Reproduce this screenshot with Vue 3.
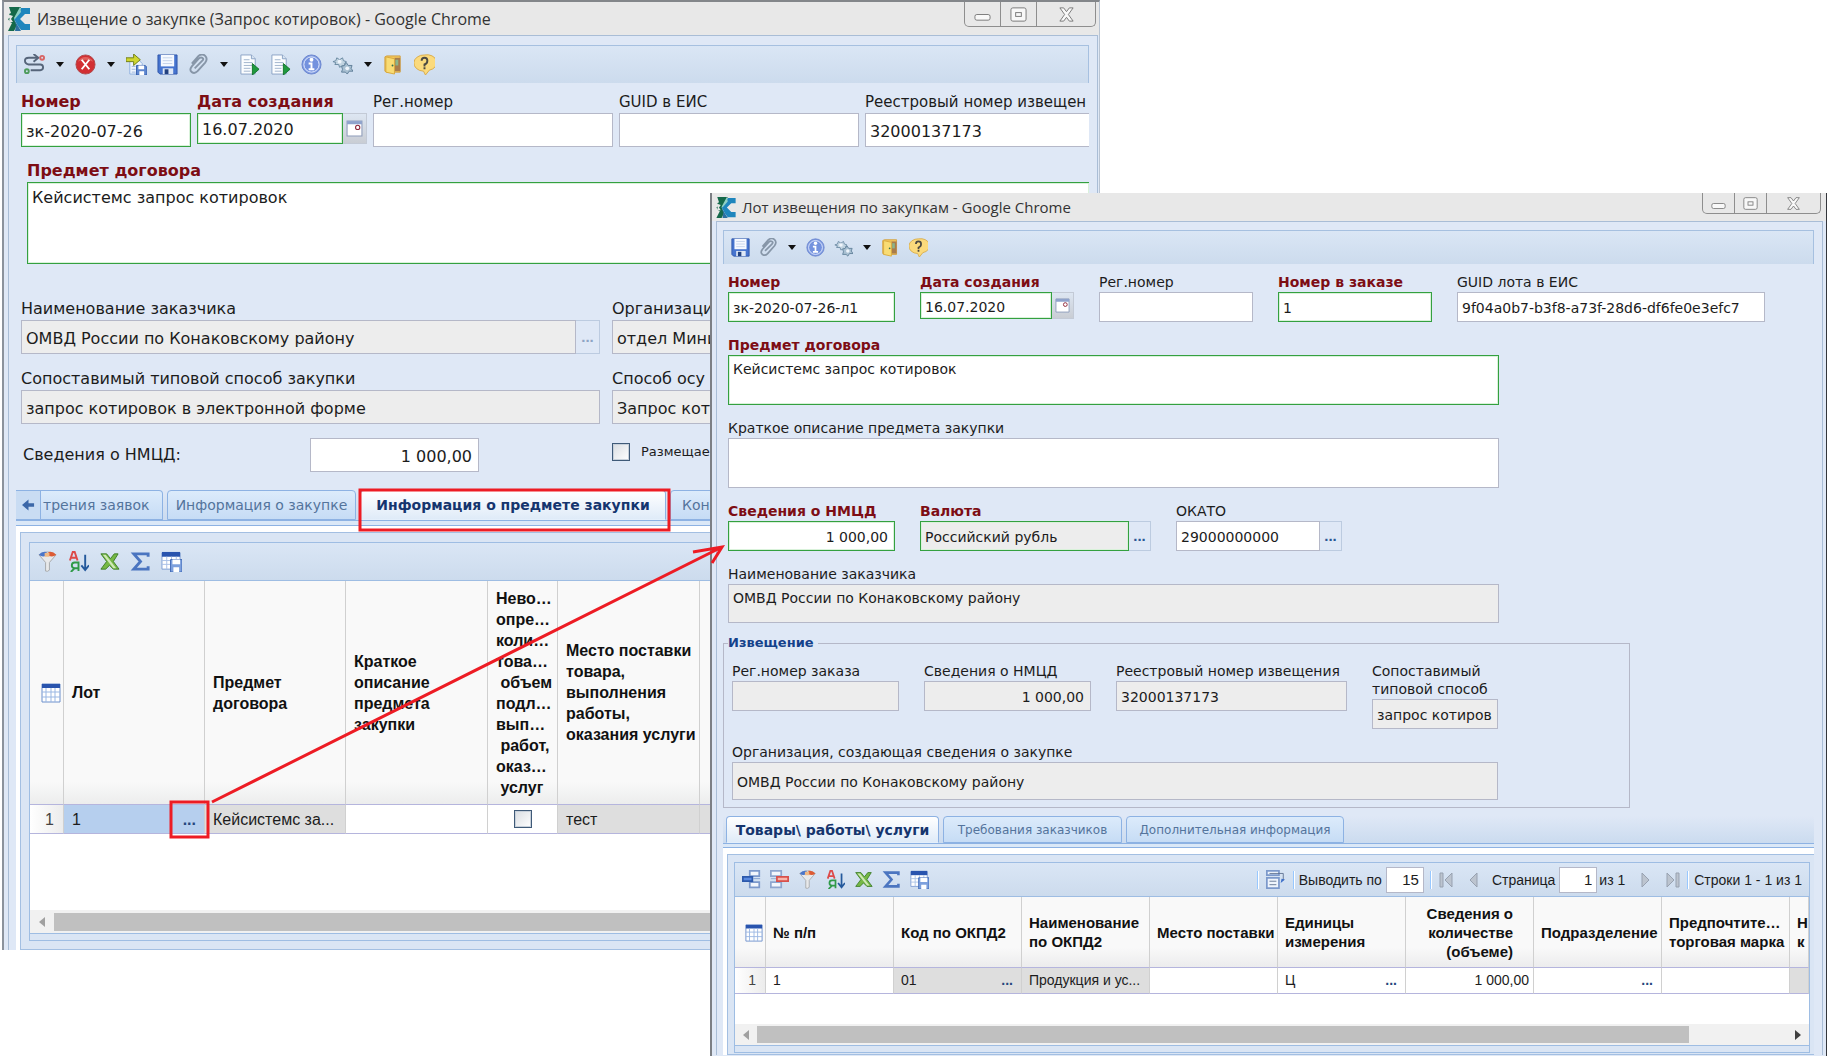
<script setup>
const noticeTools = [
  { icon: 'route', label: 'Маршрут', menu: true },
  { icon: 'cancel', label: 'Отмена', menu: true },
  { icon: 'saveas', label: 'Сохранить и закрыть' },
  { icon: 'save', label: 'Сохранить' },
  { icon: 'clip', label: 'Вложения', menu: true },
  { icon: 'doc', label: 'Отчёт' },
  { icon: 'doc', label: 'Печать' },
  { icon: 'info', label: 'Сведения' },
  { icon: 'gear', label: 'Настройки', menu: true },
  { icon: 'door', label: 'Выход' },
  { icon: 'help', label: 'Справка' },
]
const lotTools = [
  { icon: 'save', label: 'Сохранить' },
  { icon: 'clip', label: 'Вложения', menu: true },
  { icon: 'info', label: 'Сведения' },
  { icon: 'gear', label: 'Настройки', menu: true },
  { icon: 'door', label: 'Выход' },
  { icon: 'help', label: 'Справка' },
]
const gridTools = [
  { icon: 'filter', label: 'Фильтр' },
  { icon: 'sort', label: 'Сортировка' },
  { icon: 'excel', label: 'Экспорт в Excel' },
  { icon: 'sum', label: 'Итоги' },
  { icon: 'gridsave', label: 'Сохранить вид' },
]
const goodsTools = [
  { icon: 'rowadd', label: 'Добавить строку' },
  { icon: 'rowdel', label: 'Удалить строку' },
  ...gridTools,
]
// The last column of each table has no width and takes what is left.
const lotColumns = [
  { w: 141, lines: ['Лот'] },
  { w: 141, lines: ['Предмет', 'договора'] },
  { w: 142, lines: ['Краткое', 'описание', 'предмета', 'закупки'] },
  { w: 70, lines: ['Нево…', 'опре…', 'коли…', 'това…', '\u00a0объем', 'подл…', 'вып…', '\u00a0работ,', 'оказ…', '\u00a0услуг'] },
  { w: 142, lines: ['Место поставки', 'товара,', 'выполнения', 'работы,', 'оказания услуги'] },
  { lines: [] },
]
const goodsColumns = [
  { w: 128, lines: ['№ п/п'] },
  { w: 128, lines: ['Код по ОКПД2'] },
  { w: 128, lines: ['Наименование', 'по ОКПД2'] },
  { w: 128, lines: ['Место поставки'] },
  { w: 128, lines: ['Единицы', 'измерения'] },
  { w: 128, lines: ['Сведения о', 'количестве', '(объеме)'], num: true },
  { w: 128, lines: ['Подразделение'] },
  { w: 128, lines: ['Предпочтите…', 'торговая марка'] },
  { lines: ['Н', 'к'] },
]
const colStyle = (c) => (c.w ? { width: c.w + 'px' } : null)
</script>

<template>
  <svg class="sprite" aria-hidden="true">
    <symbol id="logo" viewBox="0 0 22 24">
      <path d="M1 0h12L9 7l-3 5 3 6-3 6H0l4-8-2-1-2-3 3-2-2-3 2-1z" fill="#15694a" />
      <path d="M2 8l3 1-2 3 2 3-4 0z" fill="#e8e8e8" />
      <path d="M13 1h9v6h-5l-5 5 5 5h5v6h-9l-3-4-4-7 4-5z" fill="#1f86bd" />
      <path d="M12 0L6 11l1 1 6-7z" fill="#8fd0c4" />
      <path d="M6 13l4 6 3 5H7l1-6z" fill="#2b6fa0" />
    </symbol>
    <symbol id="route" viewBox="0 0 22 22">
      <path d="M14 4H5q-4 0-4 3t4 4h12q3 0 3 3t-3 3H7" fill="none" stroke="#56657a" stroke-width="2" />
      <path d="M10 0l5 4-5 4" fill="none" stroke="#56657a" stroke-width="2" />
      <circle cx="19" cy="4" r="2" fill="none" stroke="#d86464" stroke-width="2" />
      <circle cx="3" cy="18" r="2" fill="none" stroke="#4e9c5c" stroke-width="2" />
    </symbol>
    <symbol id="cancel" viewBox="0 0 22 22">
      <circle cx="11" cy="11" r="10" fill="#d22f33" stroke="#b04a4c" />
      <path d="M3 8a9 9 0 0 1 16 0q-8-4-16 0z" fill="#e0605c" />
      <path d="M7 6l8 10M15 6L7 16" stroke="#fff" stroke-width="2" />
    </symbol>
    <symbol id="saveas" viewBox="0 0 22 22">
      <path d="M4 6h9l4 4v11H4z" fill="#eef4fc" stroke="#8fb0e0" />
      <path d="M11 12h9l2 2v8H11z" fill="#5d86cf" stroke="#3560ad" />
      <path d="M13 12h6v4h-6zM14 18h5v4h-5z" fill="#fff" />
      <path d="M6 13h4M6 16h4M6 19h4" stroke="#9db6dc" />
      <path d="M0 4h8V0l7 6-7 6V8H0z" fill="#cfd62f" stroke="#6f7d1a" />
    </symbol>
    <symbol id="save" viewBox="0 0 22 22">
      <path d="M1 1h20v20H3l-2-2z" fill="#4674cf" stroke="#2f56a8" />
      <path d="M4 1h14v12H4z" fill="#f6f9ff" />
      <path d="M6 4h10M6 7h10M6 10h10" stroke="#c3d2ea" />
      <path d="M6 15h11v6H6z" fill="#dfe8f6" />
      <path d="M8 16h4v5H8z" fill="#23417f" />
    </symbol>
    <symbol id="clip" viewBox="0 0 22 22">
      <path d="M7 15l8-8q2-2 0-3t-4 1l-7 8q-3 4 0 6t6-1l8-9q3-4 0-7t-7 0l-7 8" fill="none" stroke="#8796a8" stroke-width="2" />
    </symbol>
    <symbol id="doc" viewBox="0 0 22 22">
      <path d="M2 1h11l4 4v16H2z" fill="#fbfdff" stroke="#8aa3c4" />
      <path d="M13 1v4h4" fill="#d9e5f3" stroke="#8aa3c4" />
      <path d="M5 6h6M5 9h9M5 12h9M5 15h7M5 18h7" stroke="#9fb3cd" />
      <path d="M14 10l7 6-7 6z" fill="#1f9a3e" stroke="#14742b" />
    </symbol>
    <symbol id="info" viewBox="0 0 22 22">
      <circle cx="11" cy="11" r="10" fill="#7f9bdf" stroke="#6a84cf" />
      <circle cx="11" cy="11" r="8" fill="#7492de" stroke="#e6edff" />
      <circle cx="11" cy="6" r="2" fill="#fff" />
      <path d="M8 10h4M11 9v7M8 16h6" fill="none" stroke="#fff" stroke-width="2" />
    </symbol>
    <symbol id="gear" viewBox="0 0 22 22">
      <path d="M1 8l3-1 1-3 3 2 3-2 1 3 3 1-2 2 1 3-3-1-3 2-1-3H3l1-2z" fill="#c3d5e2" stroke="#6b8aa3" />
      <path d="M10 13l3-1 2-3 2 3h4l-1 3 2 3-4 0-2 3-2-2-4 0 1-3z" fill="#a9c0d2" stroke="#5f7f99" />
      <circle cx="8" cy="8" r="2" fill="#eef4fb" />
      <circle cx="16" cy="15" r="2" fill="#eef4fb" />
    </symbol>
    <symbol id="door" viewBox="0 0 22 22">
      <path d="M2 3l2-1h14v17H4l-2-1z" fill="#f2c65a" stroke="#d2a040" />
      <path d="M12 4h6v14h-6z" fill="#a97c4b" />
      <path d="M13 6h3v6h-3z" fill="#8bb58a" />
      <path d="M3 3l9 2v16l-9-2z" fill="#f9dc74" stroke="#d8a93c" />
      <circle cx="10" cy="12" r="1" fill="#356f4c" />
    </symbol>
    <symbol id="help" viewBox="0 0 22 22">
      <path d="M11 1a10 8 0 0 1 5 16l-4 5-2-4A10 8 0 0 1 11 1z" fill="#fbda7c" stroke="#d9ab48" />
      <path d="M8 7q0-3 3-3t3 3-3 4v2M11 14v2" fill="none" stroke="#4d4a42" stroke-width="2" />
    </symbol>
    <symbol id="filter" viewBox="0 0 22 22">
      <path d="M2 4q9-6 18 0l-7 8v8q-2 2-4 1v-9z" fill="#e8e9ea" stroke="#a6a8aa" />
      <path d="M2 4q3-4 8-3v4q-5 2-8-1z" fill="#4b76c9" />
      <path d="M12 1q5-1 8 3-3 3-8 1z" fill="#dd5b34" />
      <path d="M8 2h5v4H8z" fill="#f0b985" />
    </symbol>
    <symbol id="sort" viewBox="0 0 22 22">
      <path d="M2 10l3-9h2l3 9M3 7h6" fill="none" stroke="#dd4a48" stroke-width="2" />
      <path d="M11 21v-9H7q-3 0-3 3t3 3h4M7 18l-4 4" fill="none" stroke="#2f9a48" stroke-width="2" />
      <path d="M18 4v15M14 15l4 5 4-5" fill="none" stroke="#24599c" stroke-width="2" />
    </symbol>
    <symbol id="excel" viewBox="0 0 22 22">
      <path d="M2 3h6l4 5 4-5h4l-5 8 6 8h-6l-4-4-4 4H2l6-8z" fill="#76b845" stroke="#3c7d28" />
      <path d="M4 4h3l11 14h-3z" fill="#cfe8b6" />
    </symbol>
    <symbol id="sum" viewBox="0 0 22 22">
      <path d="M19 6V3H4l7 8-7 8h15v-3" fill="none" stroke="#4b75c0" stroke-width="3" />
    </symbol>
    <symbol id="gridsave" viewBox="0 0 22 22">
      <path d="M1 2h19v17H1z" fill="#fff" stroke="#7d9dd3" />
      <path d="M1 1h19v5H1z" fill="#2954ae" />
      <path d="M1 10h19M1 14h19M6 6v13M11 6v13M16 6v13" stroke="#a8c0e6" />
      <path d="M10 9h12v13H10z" fill="#7da0dd" stroke="#3f69b7" />
      <path d="M12 9h8v5h-8zM13 17h6v5h-6z" fill="#fff" />
    </symbol>
    <symbol id="gridicon" viewBox="0 0 20 20">
      <path d="M1 1h18v18H1z" fill="#fff" stroke="#6d90cc" />
      <path d="M1 1h18v4H1z" fill="#2954ae" />
      <path d="M1 9h18M1 14h18M5 5v14M10 5v14M14 5v14" stroke="#9ab7e3" />
    </symbol>
    <symbol id="rowadd" viewBox="0 0 22 22">
      <path d="M9 1h11v6H9zM9 14h11v6H9z" fill="#f2f6fc" stroke="#7c99cb" stroke-width="2" />
      <path d="M1 8h11v5H1z" fill="#5b8ae0" stroke="#2c59ac" stroke-width="2" />
      <path d="M13 10h8" stroke="#7c99cb" />
    </symbol>
    <symbol id="rowdel" viewBox="0 0 22 22">
      <path d="M1 1h12v6H1zM1 14h12v6H1z" fill="#f2f6fc" stroke="#8ea6cf" stroke-width="2" />
      <path d="M8 8h13v5H8z" fill="#f9b4aa" stroke="#d8504b" stroke-width="2" />
      <path d="M1 10h6" stroke="#8ea6cf" />
    </symbol>
    <symbol id="pagesize" viewBox="0 0 22 22">
      <path d="M1 1h14v5H1zM1 9h14v12H1z" fill="#eef4fc" stroke="#7c99cb" stroke-width="2" />
      <path d="M4 4h16v8M4 13h8M4 17h8" fill="none" stroke="#5b6f8e" />
      <path d="M17 15l1-5 4 1z" fill="#3d6fc9" />
    </symbol>
  </svg>

  <main class="desktop">
    <section class="win notice" aria-label="Извещение о закупке">
      <header class="titlebar">
        <svg class="logo"><use href="#logo" /></svg>
        <h1>Извещение о закупке (Запрос котировок) - Google Chrome</h1>
        <div class="winbtns">
          <button aria-label="Свернуть"><svg viewBox="0 0 18 18"><rect x="1" y="9" width="16" height="6" rx="2" /></svg></button>
          <button aria-label="Развернуть"><svg viewBox="0 0 18 18"><rect x="1" y="2" width="16" height="14" rx="2" /><rect x="6" y="7" width="6" height="4" /></svg></button>
          <button class="close" aria-label="Закрыть"><svg viewBox="0 0 18 18"><path d="M2 2h4l3 4 3-4h4l-5 7 5 7h-4l-3-4-3 4H2l5-7z" /></svg></button>
        </div>
      </header>
      <div class="body">
        <div class="toolbar" role="toolbar">
          <template v-for="t in noticeTools" :key="t.label">
            <button class="tool" :aria-label="t.label"><svg><use :href="'#' + t.icon" /></svg></button>
            <button v-if="t.menu" class="caret" :aria-label="t.label + ': меню'"></button>
          </template>
        </div>

        <div class="row top">
          <div class="field w170">
            <label class="req" for="n-num">Номер</label>
            <input id="n-num" class="must" value="зк-2020-07-26" />
          </div>
          <div class="field w170">
            <label class="req" for="n-date">Дата создания</label>
            <div class="combo date">
              <input id="n-date" class="must" value="16.07.2020" />
              <button class="cal" aria-label="Календарь"><svg viewBox="0 0 16 16"><path d="M1 1h14v14H1z" fill="#fff" stroke="#8f9dbb" /><path d="M1 1h14v3H1z" fill="#8fa3cc" /><circle cx="11" cy="7" r="2" fill="#fff" stroke="#8d2438" /></svg></button>
            </div>
          </div>
          <div class="field w240">
            <label for="n-reg">Рег.номер</label>
            <input id="n-reg" value="" />
          </div>
          <div class="field w240">
            <label for="n-guid">GUID в ЕИС</label>
            <input id="n-guid" value="" />
          </div>
          <div class="field w240">
            <label for="n-reestr">Реестровый номер извещен</label>
            <input id="n-reestr" value="32000137173" />
          </div>
        </div>

        <div class="field subject">
          <label class="req" for="n-subj">Предмет договора</label>
          <textarea id="n-subj" class="must">Кейсистемс запрос котировок</textarea>
        </div>

        <div class="pair first">
          <div class="field">
            <label for="n-cust">Наименование заказчика</label>
            <div class="combo">
              <input id="n-cust" class="ro" readonly value="ОМВД России по Конаковскому району" />
              <button class="dots dim" aria-label="Выбрать">...</button>
            </div>
          </div>
          <div class="field">
            <label for="n-org">Организаци</label>
            <input id="n-org" class="ro" readonly value="отдел Мини" />
          </div>
        </div>
        <div class="pair">
          <div class="field">
            <label for="n-type">Сопоставимый типовой способ закупки</label>
            <input id="n-type" class="ro" readonly value="запрос котировок в электронной форме" />
          </div>
          <div class="field">
            <label for="n-way">Способ осу</label>
            <input id="n-way" class="ro" readonly value="Запрос кот" />
          </div>
        </div>
        <div class="pair money">
          <div class="inline">
            <label for="n-sum">Сведения о НМЦД:</label>
            <input id="n-sum" class="num" value="1 000,00" />
          </div>
          <div class="inline check">
            <input id="n-place" type="checkbox" />
            <label for="n-place">Размещае</label>
          </div>
        </div>

        <nav class="tabs">
          <button class="scroller" aria-label="Назад"><svg viewBox="0 0 14 12"><path d="M7 0v4h6v4H7v4L0 6z" fill="#3c67a8" /></svg></button>
          <button class="tab cut">трения заявок</button>
          <button class="tab t2">Информация о закупке</button>
          <button class="tab active t3">Информация о предмете закупки</button>
          <button class="tab t4">Кон</button>
        </nav>

        <div class="sheet">
          <div class="grid">
            <div class="toolbar flat" role="toolbar">
              <button v-for="t in gridTools" :key="t.label" class="tool" :aria-label="t.label"><svg><use :href="'#' + t.icon" /></svg></button>
            </div>
            <table>
              <colgroup>
                <col class="c-idx" />
                <col v-for="(c, i) in lotColumns" :key="i" :style="colStyle(c)" />
              </colgroup>
              <thead>
                <tr>
                  <th class="idx"><svg class="gi"><use href="#gridicon" /></svg></th>
                  <th v-for="(c, i) in lotColumns" :key="i"><div v-for="l in c.lines" :key="l">{{ l }}</div></th>
                </tr>
              </thead>
              <tbody>
                <tr>
                  <td class="idx">1</td>
                  <td class="sel"><div class="pick"><span>1</span><button aria-label="Открыть лот">...</button></div></td>
                  <td class="gray">Кейсистемс за...</td>
                  <td></td>
                  <td class="mid"><input type="checkbox" aria-label="Невозможно определить количество" /></td>
                  <td class="gray">тест</td>
                  <td class="gray"></td>
                </tr>
              </tbody>
            </table>
            <div class="blank"></div>
            <div class="hscroll"><span class="arr left"></span><span class="thumb"></span></div>
            <div class="foot"></div>
          </div>
        </div>
      </div>
    </section>

    <section class="win lot" aria-label="Лот извещения по закупкам">
      <header class="titlebar">
        <svg class="logo"><use href="#logo" /></svg>
        <h1>Лот извещения по закупкам - Google Chrome</h1>
        <div class="winbtns">
          <button aria-label="Свернуть"><svg viewBox="0 0 18 18"><rect x="1" y="9" width="16" height="6" rx="2" /></svg></button>
          <button aria-label="Развернуть"><svg viewBox="0 0 18 18"><rect x="1" y="2" width="16" height="14" rx="2" /><rect x="6" y="7" width="6" height="4" /></svg></button>
          <button class="close" aria-label="Закрыть"><svg viewBox="0 0 18 18"><path d="M2 2h4l3 4 3-4h4l-5 7 5 7h-4l-3-4-3 4H2l5-7z" /></svg></button>
        </div>
      </header>
      <div class="body">
        <div class="toolbar" role="toolbar">
          <template v-for="t in lotTools" :key="t.label">
            <button class="tool" :aria-label="t.label"><svg><use :href="'#' + t.icon" /></svg></button>
            <button v-if="t.menu" class="caret" :aria-label="t.label + ': меню'"></button>
          </template>
        </div>

        <div class="form">
          <div class="row">
            <div class="field w167">
              <label class="req" for="l-num">Номер</label>
              <input id="l-num" class="must" value="зк-2020-07-26-л1" />
            </div>
            <div class="field w154">
              <label class="req" for="l-date">Дата создания</label>
              <div class="combo date">
                <input id="l-date" class="must" value="16.07.2020" />
                <button class="cal" aria-label="Календарь"><svg viewBox="0 0 16 16"><path d="M1 1h14v14H1z" fill="#fff" stroke="#8f9dbb" /><path d="M1 1h14v3H1z" fill="#8fa3cc" /><circle cx="11" cy="7" r="2" fill="#fff" stroke="#8d2438" /></svg></button>
              </div>
            </div>
            <div class="field w154">
              <label for="l-reg">Рег.номер</label>
              <input id="l-reg" value="" />
            </div>
            <div class="field w154">
              <label class="req" for="l-ord">Номер в заказе</label>
              <input id="l-ord" class="must" value="1" />
            </div>
            <div class="field w308">
              <label for="l-guid">GUID лота в ЕИС</label>
              <input id="l-guid" value="9f04a0b7-b3f8-a73f-28d6-df6fe0e3efc7" />
            </div>
          </div>
          <div class="field wide">
            <label class="req" for="l-subj">Предмет договора</label>
            <textarea id="l-subj" class="must tall">Кейсистемс запрос котировок</textarea>
          </div>
          <div class="field wide">
            <label for="l-short">Краткое описание предмета закупки</label>
            <textarea id="l-short" class="tall"></textarea>
          </div>
          <div class="row">
            <div class="field w167">
              <label class="req" for="l-sum">Сведения о НМЦД</label>
              <input id="l-sum" class="must num" value="1 000,00" />
            </div>
            <div class="field w231">
              <label class="req" for="l-cur">Валюта</label>
              <div class="combo">
                <input id="l-cur" class="must ro" readonly value="Российский рубль" />
                <button class="dots" aria-label="Выбрать валюту">...</button>
              </div>
            </div>
            <div class="field w166">
              <label for="l-okato">ОКАТО</label>
              <div class="combo">
                <input id="l-okato" value="29000000000" />
                <button class="dots" aria-label="Выбрать ОКАТО">...</button>
              </div>
            </div>
          </div>
          <div class="field wide">
            <label for="l-cust">Наименование заказчика</label>
            <textarea id="l-cust" class="ro" readonly>ОМВД России по Конаковскому району</textarea>
          </div>
        </div>

        <fieldset>
          <legend>Извещение</legend>
          <div class="row">
            <div class="field w167">
              <label for="f-reg">Рег.номер заказа</label>
              <input id="f-reg" class="ro" readonly value="" />
            </div>
            <div class="field w167">
              <label for="f-sum">Сведения о НМЦД</label>
              <input id="f-sum" class="ro num" readonly value="1 000,00" />
            </div>
            <div class="field w231">
              <label for="f-reestr">Реестровый номер извещения</label>
              <input id="f-reestr" class="ro" readonly value="32000137173" />
            </div>
            <div class="field w126">
              <label for="f-type">Сопоставимый<br />типовой способ</label>
              <input id="f-type" class="ro" readonly value="запрос котиров" />
            </div>
          </div>
          <div class="field org">
            <label for="f-org">Организация, создающая сведения о закупке</label>
            <input id="f-org" class="ro" readonly value="ОМВД России по Конаковскому району" />
          </div>
        </fieldset>

        <nav class="tabs">
          <button class="tab active g1">Товары\ работы\ услуги</button>
          <button class="tab g2">Требования заказчиков</button>
          <button class="tab g3">Дополнительная информация</button>
        </nav>

        <div class="sheet">
          <div class="grid">
            <div class="toolbar flat" role="toolbar">
              <button v-for="t in goodsTools" :key="t.label" class="tool" :aria-label="t.label"><svg><use :href="'#' + t.icon" /></svg></button>
              <div class="pager">
                <i class="sep"></i>
                <button class="tool" aria-label="Размер страницы"><svg><use href="#pagesize" /></svg></button>
                <i class="sep"></i>
                <label for="p-size">Выводить по</label>
                <input id="p-size" class="num" value="15" />
                <i class="sep"></i>
                <button class="nav" aria-label="Первая"><svg viewBox="0 0 14 16"><path d="M1 1h3v14H1zM13 1v14L6 8z" /></svg></button>
                <button class="nav" aria-label="Предыдущая"><svg viewBox="0 0 14 16"><path d="M10 1v14L3 8z" /></svg></button>
                <label for="p-page">Страница</label>
                <input id="p-page" class="num" value="1" />
                <span class="of">из 1</span>
                <button class="nav" aria-label="Следующая"><svg viewBox="0 0 14 16"><path d="M4 1v14l7-7z" /></svg></button>
                <button class="nav" aria-label="Последняя"><svg viewBox="0 0 14 16"><path d="M1 1v14l7-7zM10 1h3v14h-3z" /></svg></button>
                <i class="sep"></i>
                <span class="total">Строки 1 - 1 из 1</span>
              </div>
            </div>
            <table>
              <colgroup>
                <col class="c-idx" />
                <col v-for="(c, i) in goodsColumns" :key="i" :style="colStyle(c)" />
              </colgroup>
              <thead>
                <tr>
                  <th class="idx"><svg class="gi"><use href="#gridicon" /></svg></th>
                  <th v-for="(c, i) in goodsColumns" :key="i" :class="{ rt: c.num }"><div v-for="l in c.lines" :key="l">{{ l }}</div></th>
                </tr>
              </thead>
              <tbody>
                <tr>
                  <td class="idx">1</td>
                  <td>1</td>
                  <td class="gray"><div class="pick"><span>01</span><button aria-label="Выбрать код">...</button></div></td>
                  <td class="gray">Продукция и ус...</td>
                  <td></td>
                  <td><div class="pick"><span>Ц</span><button aria-label="Выбрать единицу">...</button></div></td>
                  <td class="right">1 000,00</td>
                  <td><div class="pick"><span></span><button aria-label="Выбрать подразделение">...</button></div></td>
                  <td></td>
                  <td class="gray"></td>
                </tr>
              </tbody>
            </table>
            <div class="blank"></div>
            <div class="hscroll"><span class="arr left"></span><span class="thumb"></span><span class="arr right"></span></div>
            <div class="foot"></div>
          </div>
        </div>
      </div>
    </section>

    <svg class="marks" aria-hidden="true">
      <rect x="360" y="490" width="309" height="40" />
      <rect x="171" y="802" width="37" height="35" />
      <path d="M212 802L722 547M693 552l29-5-10 16" />
    </svg>
  </main>
</template>

<style>
body {
  margin: 0;
  background: #fff;
}
</style>

<style scoped>
* {
  box-sizing: border-box;
}
.sprite {
  position: absolute;
  width: 0;
  height: 0;
}
.desktop {
  position: relative;
  display: grid;
  min-height: 100vh;
  overflow: hidden;
  font-family: 'DejaVu Sans', Verdana, sans-serif;
  color: #1c1c1c;
}
.win {
  grid-area: 1 / 1;
  display: flex;
  flex-direction: column;
  background: #dfe8f6;
  min-width: 0;
}
.notice {
  --fs: 16px;
  --grid-fs: 16px;
  --lh: 20px;
  --in: 34px;
  --icon: 21px;
  --tool: 24px;
  --gap: 7px;
  align-self: start;
  margin-left: 2px;
  width: 60.1%;
  padding: 0 1px 0 4px;
  border-left: 2px solid #8b929c;
  border-top: 2px solid #83868a;
  border-right: 1px solid #b9c4d2;
}
.lot {
  --fs: 14px;
  --grid-fs: 14px;
  --lh: 18px;
  --in: 30px;
  --icon: 19px;
  --tool: 22px;
  --gap: 6px;
  margin: 193px 0 0 710px;
  padding: 0 3px 0 4px;
  border-left: 2px solid #7c7f84;
  border-right: 1px solid #33363b;
  z-index: 1;
}
button {
  margin: 0;
  padding: 0;
  border: 0;
  background: none;
  font: inherit;
  color: inherit;
}
.titlebar {
  display: flex;
  align-items: center;
  margin: 0 -1px 0 -4px;
  padding: 0 3px 0 4px;
  height: 33px;
  background: #e8e8e8;
  gap: 7px;
}
.lot .titlebar {
  height: 28px;
  margin: 0 -3px 0 -4px;
  padding-right: 5px;
  gap: 6px;
}
.logo {
  width: 22px;
  height: 24px;
}
.lot .logo {
  width: 20px;
  height: 21px;
}
h1 {
  flex: 1;
  margin: 0;
  font: 400 16px/24px 'Open Sans', sans-serif;
  color: #333;
  white-space: nowrap;
}
.lot h1 {
  font-size: 15px;
}
.winbtns {
  display: flex;
  align-self: flex-start;
  border: 1px solid #8e8e8e;
  border-top: 0;
  border-radius: 0 0 5px 5px;
}
.winbtns button {
  display: grid;
  place-items: center;
  width: 36px;
  height: 24px;
  border-right: 1px solid #8e8e8e;
}
.winbtns .close {
  width: 58px;
  border-right: 0;
}
.winbtns svg {
  width: 17px;
  height: 17px;
  fill: #f8f8f8;
  stroke: #777;
  stroke-width: 1;
}
.lot .winbtns button {
  width: 32px;
  height: 20px;
}
.lot .winbtns .close {
  width: 53px;
}
.lot .winbtns svg {
  width: 15px;
  height: 15px;
}
.body {
  border: 1px solid #a9bdd6;
  border-bottom: 0;
  padding: 9px 8px 0 7px;
  overflow: hidden;
}
.lot .body {
  padding: 8px 8px 0 6px;
}
.toolbar {
  display: flex;
  align-items: center;
  gap: var(--gap);
  height: 38px;
  padding-left: 5px;
  border: 1px solid #a6c0e0;
  border-bottom: 0;
  background: linear-gradient(#dae6f5, #ccdbed);
}
.lot .toolbar {
  height: 34px;
}
.tool {
  display: grid;
  place-items: center;
  width: var(--tool);
  height: var(--tool);
  flex: none;
}
.tool svg {
  width: var(--icon);
  height: var(--icon);
}
.caret {
  display: grid;
  place-items: center;
  width: 13px;
}
.caret::before {
  content: '';
  border: 4px solid transparent;
  border-top: 5px solid #111;
  border-bottom: 0;
}
.row {
  display: flex;
  align-items: flex-start;
}
.row.top {
  gap: 6px;
  margin: 9px 0 0 5px;
  overflow: hidden;
}
.field {
  flex: none;
  display: flex;
  flex-direction: column;
  gap: 1px;
}
label {
  font-size: var(--fs);
  line-height: var(--lh);
  white-space: nowrap;
}
.top label {
  font-size: 15px;
}
.field .req {
  font-size: var(--fs);
  font-weight: 700;
  color: #7d0d14;
}
input:not([type='checkbox']),
textarea {
  width: 100%;
  min-width: 0;
  height: var(--in);
  margin: 0;
  padding: 2px 4px 0;
  border: 1px solid #b5b8c8;
  border-radius: 0;
  background: #fff;
  color: #1c1c1c;
  font: 400 var(--fs) / 20px 'DejaVu Sans', Verdana, sans-serif;
  outline: 0;
}
textarea {
  display: block;
  resize: none;
  overflow: hidden;
}
.notice textarea {
  height: 82px;
  padding-top: 5px;
  border-right: 0 !important;
}
.lot textarea {
  height: 39px;
  padding-top: 3px;
}
.lot textarea.tall {
  height: 50px;
}
input.must:not([type='checkbox']),
textarea.must {
  border-color: #34a040;
  box-shadow: inset 0 0 0 1px #d9f2da;
}
input.ro:not([type='checkbox']),
textarea.ro {
  background: #ededed;
}
input.num:not([type='checkbox']) {
  text-align: right;
  padding-right: 6px;
}
.w126 { width: 126px; }
.w154 { width: 154px; }
.w166 { width: 166px; }
.w167 { width: 167px; }
.w170 { width: 170px; }
.w231 { width: 231px; }
.w240 { width: 240px; }
.w308 { width: 308px; }
.combo {
  display: flex;
}
.combo.date input {
  height: 31px;
}
.lot .combo.date input {
  height: 27px;
}
.cal {
  display: grid;
  place-items: center;
  flex: none;
  width: 24px;
  background: linear-gradient(#dde6f2, #c9cdd4);
  border: 1px solid #c3cad6;
  border-left: 0;
}
.lot .cal {
  width: 22px;
}
.cal svg {
  width: 17px;
  height: 17px;
}
.lot .cal svg {
  width: 15px;
  height: 15px;
}
.dots {
  flex: none;
  width: 24px;
  border: 1px solid #bccbe0;
  border-left: 0;
  color: #2c5794;
  font: 700 15px/20px 'Liberation Sans', Arial, sans-serif;
}
.lot .dots {
  width: 22px;
}
.dots.dim {
  color: #8ea4c4;
}
.subject {
  margin: 14px 0 0 11px;
}
.pair {
  display: grid;
  grid-template-columns: 579px minmax(0, 1fr);
  gap: 12px;
  margin: 15px 0 0 5px;
}
.pair.first {
  margin-top: 35px;
}
.pair.money {
  margin-top: 14px;
}
.inline {
  display: flex;
  align-items: center;
}
.inline label {
  padding-left: 2px;
  width: 289px;
}
.inline .num {
  flex: none;
  width: 169px !important;
}
.inline.check {
  padding-bottom: 6px;
}
.inline.check label {
  padding-left: 11px;
  width: auto;
  font-size: 13px;
}
input[type='checkbox'] {
  appearance: none;
  flex: none;
  width: 18px;
  height: 18px;
  margin: 0;
  border: 1px solid #3f5a78;
  box-shadow: inset 0 0 0 1px #c7d0da;
  background: linear-gradient(135deg, #d9dde2, #fff);
}
.tabs {
  display: flex;
  gap: 4px;
  margin-top: 18px;
  height: 36px;
  padding-bottom: 5px;
  border-bottom: 1px solid #8db2e3;
  background: linear-gradient(#dfe8f6 0, #cbdbef 30px, #8db2e3 30px, #8db2e3 31px, #dbe8f7 31px);
  overflow: hidden;
}
.lot .tabs {
  height: 32px;
  margin-top: 8px;
  padding: 0 0 4px 3px;
  background: linear-gradient(#dfe8f6 0, #cbdbef 27px, #8db2e3 27px, #8db2e3 28px, #dbe8f7 28px);
}
.tab {
  flex: none;
  border: 1px solid #8db2e3;
  border-radius: 4px 4px 0 0;
  background: linear-gradient(#dcebfb, #c6dcf5);
  color: #54749c;
  font: 400 14px/20px 'DejaVu Sans', Tahoma, sans-serif;
  white-space: nowrap;
}
.lot .tab {
  font-size: 12px;
}
.tab.active {
  border-bottom-color: #e4effb;
  background: linear-gradient(#fff, #dfebf8);
  color: #15356e;
  font-weight: 700;
}
.lot .tab.active {
  font-size: 14px;
}
.scroller {
  display: grid;
  place-items: center;
  flex: none;
  width: 25px;
  border: 1px solid #8db2e3;
  border-left: 0;
  background: #c9dcf3;
}
.scroller svg {
  width: 13px;
  height: 12px;
}
.tab.cut {
  width: 122px;
  margin-left: -4px;
  border-radius: 0 4px 0 0;
  border-left: 0;
  text-align: left;
  padding-left: 2px;
}
.t2 { width: 189px; }
.t3 { width: 306px; }
.t4 {
  width: 120px;
  text-align: left;
  padding-left: 11px;
}
.g1 { width: 213px; }
.g2 { width: 179px; }
.g3 { width: 218px; }
.sheet {
  background: #fff;
  padding: 6px 0 0 4px;
}
.grid {
  border: 1px solid #a3bfe2;
  border-right: 0;
  background: #dae5f4;
  padding: 9px 0 8px 8px;
}
.lot .grid {
  padding: 7px 4px 1px 6px;
}
.toolbar.flat {
  border: 1px solid #9ebde3;
  height: 39px;
}
.lot .toolbar.flat {
  height: 35px;
}
.pager {
  display: flex;
  align-items: center;
  margin-left: auto;
  padding-right: 7px;
}
.pager .tool {
  width: 34px;
}
.pager label,
.pager span {
  font: 400 14px/18px 'Liberation Sans', Arial, sans-serif;
  white-space: nowrap;
  padding: 0 4px;
}
.pager .of {
  padding: 0 6px 0 2px;
}
.pager .total {
  padding: 0 0 0 5px;
}
.pager input.num:not([type='checkbox']) {
  width: 38px;
  height: 26px;
  padding: 1px 4px;
  font: 400 15px/20px 'Liberation Sans', Arial, sans-serif;
}
.sep {
  width: 2px;
  height: 18px;
  border-left: 1px solid #98c8ff;
  border-right: 1px solid #fff;
}
.pager input + .sep {
  margin-left: 6px;
}
.nav {
  display: grid;
  place-items: center;
  width: 28px;
}
.nav svg {
  width: 14px;
  height: 16px;
  fill: #bcc4cf;
  stroke: #97a1b0;
  stroke-width: 1;
}
table {
  width: 100%;
  table-layout: fixed;
  border-collapse: separate;
  border-spacing: 0;
  border-left: 1px solid #9ebde3;
  background: #fff;
  font: 400 var(--grid-fs) / 21px 'Liberation Sans', Arial, sans-serif;
}
.lot table {
  line-height: 19px;
  border-right: 1px solid #9ebde3;
}
.c-idx {
  width: 34px;
}
.lot .c-idx {
  width: 31px;
}
th,
td {
  overflow: hidden;
  white-space: nowrap;
  text-align: left;
  padding: 0 0 0 8px;
  border-right: 1px solid #d0d0d0;
}
.lot th,
.lot td {
  padding-left: 7px;
}
th {
  height: 224px;
  border-bottom: 1px solid #b5b5dd;
  background: linear-gradient(#f9f9f9 0 90%, #eceded);
  color: #111;
}
.lot th {
  height: 71px;
  font-size: 15px;
  background: linear-gradient(#f9f9f9 0 72%, #ececed);
}
td {
  height: 29px;
  border-bottom: 1px solid #b5b5dd;
}
.lot td {
  height: 26px;
}
.lot th.rt {
  text-align: right;
  padding-right: 20px;
}
.lot td.right {
  text-align: right;
  padding-right: 4px;
}
th.idx,
.lot th.idx {
  padding: 0 2px 0 0;
  text-align: right;
}
td.idx,
.lot td.idx {
  background: linear-gradient(90deg, #fff, #ececec);
  text-align: right;
  padding: 0 9px 0 0;
  color: #444;
}
.gi {
  width: 20px;
  height: 20px;
  vertical-align: middle;
}
.lot .gi {
  width: 18px;
  height: 18px;
}
td.gray {
  background: #dedede;
}
td.sel {
  background: #b6cfee;
}
td.mid {
  padding: 0;
  text-align: center;
}
td.mid input {
  display: block;
  margin: 0 auto;
}
.pick {
  display: flex;
  justify-content: space-between;
  padding-right: 8px;
}
.pick button {
  font-weight: 700;
  color: #24467d;
}
.blank {
  height: 76px;
  background: #fff;
  border-left: 1px solid #9ebde3;
}
.lot .blank {
  height: 30px;
  border-right: 1px solid #9ebde3;
}
.hscroll {
  display: flex;
  align-items: center;
  height: 24px;
  background: #f1f1f1;
  border: 1px solid #9ebde3;
  border-top: 0;
}
.lot .hscroll {
  height: 22px;
}
.arr {
  display: grid;
  place-items: center;
  flex: none;
  width: 24px;
}
.lot .arr {
  width: 22px;
}
.arr::before {
  content: '';
  border: 5px solid transparent;
}
.arr.left::before {
  border-left: 0;
  border-right: 6px solid #a0a0a0;
}
.arr.right::before {
  border-right: 0;
  border-left: 6px solid #404040;
}
.thumb {
  flex: 1;
  height: 18px;
  background: #c0c0c0;
}
.lot .thumb {
  height: 17px;
  margin-right: 98px;
}
.foot {
  height: 7px;
  border: 1px solid #9ebde3;
  border-top: 0;
}
.form {
  display: flex;
  flex-direction: column;
  gap: 14px;
  padding: 9px 0 0 5px;
}
.lot .row {
  gap: 25px;
}
.wide {
  width: 771px;
  max-width: 100%;
}
fieldset {
  width: 907px;
  max-width: 100%;
  margin: 11px 0 0;
  padding: 10px 8px 7px;
  border: 1px solid #b5b8c8;
}
legend {
  margin-left: -4px;
  padding: 0 4px 0 0;
  font: 700 13px/18px 'DejaVu Sans', Verdana, sans-serif;
  color: #15428b;
}
.org {
  width: 766px;
  max-width: 100%;
  margin-top: 14px;
}
.org input:not([type='checkbox']) {
  height: 38px;
}
.marks {
  position: absolute;
  inset: 0;
  width: 100%;
  height: 100%;
  z-index: 2;
  fill: none;
  stroke: #ed1c24;
  stroke-width: 3;
  pointer-events: none;
}
</style>
